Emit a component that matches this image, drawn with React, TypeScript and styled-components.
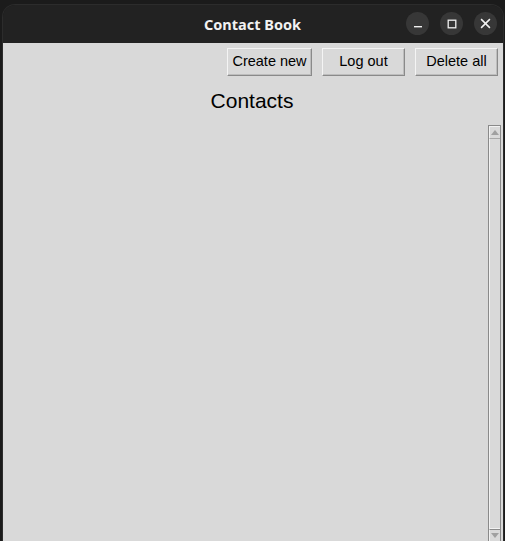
import React from "react";
import styled, { createGlobalStyle } from "styled-components";

const Global = createGlobalStyle`
  html, body { margin: 0; padding: 0; background: #1b1b1b; overflow: hidden; }
  #root { width: 505px; height: 541px; }
`;

const Page = styled.div`
  width: 505px;
  height: 541px;
  padding: 5px 2px 0 3px;
  box-sizing: border-box;
  display: flex;
`;

const Window = styled.div`
  flex: 1;
  display: flex;
  flex-direction: column;
  border-radius: 12px 12px 0 0;
  overflow: hidden;
  box-shadow: 0 0 0 1px #2c2c2c;
`;

const TitleBar = styled.div`
  height: 38px;
  flex: none;
  background: #222222;
  position: relative;
  display: flex;
  align-items: center;
  justify-content: flex-end;
  padding-right: 6px;
  gap: 11px;
`;

const Title = styled.div`
  position: absolute;
  left: 0;
  right: 0;
  top: 0;
  height: 38px;
  line-height: 38px;
  text-align: center;
  color: #f2f2f2;
  font-family: "Noto Sans", "DejaVu Sans", sans-serif;
  font-weight: 700;
  font-size: 14.5px;
  padding-right: 1px;
  pointer-events: none;
`;

const CtlButton = styled.div`
  width: 23px;
  height: 23px;
  border-radius: 50%;
  background: #373737;
  display: flex;
  align-items: center;
  justify-content: center;
  position: relative;
  z-index: 1;
  margin-top: -1px;
`;

const Content = styled.div`
  flex: 1;
  background: #d9d9d9;
  display: flex;
  flex-direction: column;
  min-height: 0;
`;

const Toolbar = styled.div`
  display: flex;
  justify-content: flex-end;
  gap: 10px;
  padding: 5px 5px 0 0;
`;

const TkButton = styled.button<{ $w: number }>`
  width: ${(p) => p.$w}px;
  height: 28px;
  box-sizing: border-box;
  background: #d9d9d9;
  border: 1px solid;
  border-color: #f4f4f4 #8a8a8a #8a8a8a #f4f4f4;
  box-shadow: inset -1px -1px 0 #bdbdbd;
  font-family: "Liberation Sans", Arial, sans-serif;
  font-size: 14.5px;
  color: #000;
  padding: 0 0 3px 0;
  margin: 0;
`;

const Heading = styled.div`
  text-align: center;
  font-family: "Liberation Sans", Arial, sans-serif;
  font-size: 21px;
  color: #000;
  margin-top: 12px;
  line-height: 26px;
  padding-right: 2px;
`;

const ListArea = styled.div`
  flex: 1;
  display: flex;
  justify-content: flex-end;
  padding: 11px 2px 0 0;
  min-height: 0;
`;

const Scrollbar = styled.div`
  width: 13px;
  box-sizing: border-box;
  border: 1px solid #8a8a8a;
  border-bottom: none;
  display: flex;
  flex-direction: column;
  background: #d9d9d9;
`;

const Arrow = styled.div`
  height: 11px;
  flex: none;
  display: flex;
  align-items: center;
  justify-content: center;
  border-top: 1px solid #f2f2f2;
  border-left: 1px solid #f2f2f2;
  border-bottom: 1px solid #a8a8a8;
`;

const ArrowDown = styled(Arrow)`
  border-top: 1px solid #8a8a8a;
  border-bottom: none;
`;

const Trough = styled.div`
  flex: 1;
  border-left: 1px solid #f2f2f2;
  border-bottom: 1px solid #f2f2f2;
`;

export default function App() {
  return (
    <>
      <Global />
      <Page>
        <Window>
          <TitleBar>
            <Title>Contact Book</Title>
            <CtlButton>
              <svg width="10" height="10" viewBox="0 0 10 10">
                <rect x="1" y="7" width="8" height="1.4" fill="#f0f0f0" />
              </svg>
            </CtlButton>
            <CtlButton>
              <svg width="10" height="10" viewBox="0 0 10 10">
                <rect x="1.2" y="1.2" width="7.6" height="7.6" fill="none" stroke="#f0f0f0" strokeWidth="1.3" />
              </svg>
            </CtlButton>
            <CtlButton>
              <svg width="11" height="11" viewBox="0 0 10 10">
                <path d="M1 1 L9 9 M9 1 L1 9" stroke="#f0f0f0" strokeWidth="1.4" />
              </svg>
            </CtlButton>
          </TitleBar>
          <Content>
            <Toolbar>
              <TkButton $w={85}>Create new</TkButton>
              <TkButton $w={83}>Log out</TkButton>
              <TkButton $w={83}>Delete all</TkButton>
            </Toolbar>
            <Heading>Contacts</Heading>
            <ListArea>
              <Scrollbar>
                <Arrow>
                  <svg width="8" height="5" viewBox="0 0 8 5">
                    <path d="M4 0 L8 5 L0 5 Z" fill="#a0a0a0" />
                  </svg>
                </Arrow>
                <Trough />
                <ArrowDown>
                  <svg width="8" height="5" viewBox="0 0 8 5">
                    <path d="M0 0 L8 0 L4 5 Z" fill="#a0a0a0" />
                  </svg>
                </ArrowDown>
              </Scrollbar>
            </ListArea>
          </Content>
        </Window>
      </Page>
    </>
  );
}
